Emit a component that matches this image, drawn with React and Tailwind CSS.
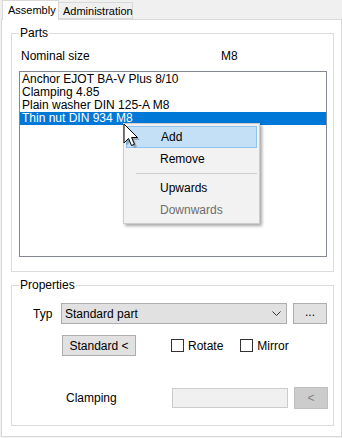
import React from 'react';

const font = { fontFamily: '"Liberation Sans", Arial, sans-serif' };

// Parts shown in the list box
const parts = [
    'Anchor EJOT BA-V Plus 8/10',
    'Clamping 4.85',
    'Plain washer DIN 125-A M8',
    'Thin nut DIN 934 M8',
];

const GroupBox = ({ title, className, children }) => (
    <div className={`relative border border-[#dcdcdc] ${className}`}>
        <span className="absolute -top-[8px] left-[7px] bg-white px-[1px] leading-[15px]">{title}</span>
        {children}
    </div>
);

const Checkbox = ({ label }) => (
    <label className="flex items-center gap-[4px]">
        <span className="w-[13px] h-[13px] border border-[#333] bg-white" />
        <span>{label}</span>
    </label>
);

const Cursor = () => (
    <svg className="absolute left-[123px] top-[123px]" width="20" height="26" viewBox="0 0 20 26">
        <path d="M2 2 L2 21 L6.5 16.5 L9.5 23.5 L12.5 22.3 L9.6 15.5 L15.5 15.5 Z" fill="rgba(0,0,0,0.25)" transform="translate(1.5,1.5)" />
        <path d="M1 1 L1 20 L5.5 15.5 L8.5 22.5 L11.5 21.3 L8.6 14.5 L14.5 14.5 Z" fill="#ffffff" stroke="#000" strokeWidth="1" strokeLinejoin="round" />
    </svg>
);

const ContextMenu = () => (
    <div className="absolute left-[123px] top-[123px] w-[137px] border border-[#cccccc] bg-[#f2f2f2] p-[2px] shadow-[2px_2px_3px_rgba(0,0,0,0.35)]">
        <div className="h-[22px] flex items-center pl-[34px] bg-[#c4e0f7] border border-[#8fc3ee]">Add</div>
        <div className="h-[22px] flex items-center pl-[34px]">Remove</div>
        <div className="h-[7px] flex items-center pl-[10px]"><div className="h-px w-full bg-[#cfcfcf]" /></div>
        <div className="h-[22px] flex items-center pl-[34px]">Upwards</div>
        <div className="h-[22px] flex items-center pl-[34px] text-[#6d6d6d]">Downwards</div>
    </div>
);

export default function App() {
    return (
        <div className="relative w-[342px] h-[438px] bg-[#f0f0f0] text-[12px] text-black overflow-hidden" style={font}>
            {/* Tabs */}
            <div className="flex items-end h-[19px] pl-[2px] text-[11px] whitespace-nowrap">
                <div className="relative z-10 w-[57px] h-[20px] -mb-[1px] bg-white border border-b-0 border-[#d9d9d9] pl-[5px] pt-[2px] leading-[15px]">Assembly</div>
                <div className="w-[74px] h-[17px] bg-[#f0f0f0] border border-l-0 border-[#d9d9d9] pl-[4px] pt-[1px] leading-[15px]">Administration</div>
            </div>

            {/* Tab page */}
            <div className="ml-[1px] w-[341px] h-[418px] bg-white border border-[#d9d9d9] pt-[13px] pl-[9px]">
                <GroupBox title="Parts" className="w-[323px] h-[239px]">
                    <div className="flex mt-[15px] ml-[9px] leading-[15px]">
                        <span className="w-[200px]">Nominal size</span>
                        <span>M8</span>
                    </div>
                    <div className="mt-[7px] ml-[7px] w-[308px] h-[186px] border border-[#828790] pt-[1px]">
                        {parts.map((p, i) => (
                            <div key={p} className={`h-[13px] leading-[13px] pl-[2px] ${i === 3 ? 'bg-[#0078d7] text-white' : ''}`}>{p}</div>
                        ))}
                    </div>
                </GroupBox>

                <GroupBox title="Properties" className="mt-[13px] w-[323px] h-[141px]">
                    <div className="flex items-center mt-[17px] ml-[21px]">
                        <span className="w-[28px]">Typ</span>
                        <div className="flex items-center justify-between w-[226px] h-[21px] bg-[#e1e1e1] border border-[#adadad] pl-[3px] pr-[5px]">
                            <span>Standard part</span>
                            <svg width="9" height="5" viewBox="0 0 9 5"><path d="M0.5 0.5 L4.5 4.5 L8.5 0.5" fill="none" stroke="#333" strokeWidth="1" /></svg>
                        </div>
                        <div className="ml-[6px] w-[34px] h-[21px] bg-[#e1e1e1] border border-[#adadad] flex items-center justify-center leading-none pb-[4px]">...</div>
                    </div>
                    <div className="flex items-center mt-[11px] ml-[50px]">
                        <div className="w-[74px] h-[21px] bg-[#e1e1e1] border border-[#adadad] flex items-center justify-center">Standard &lt;</div>
                        <div className="ml-[35px]"><Checkbox label="Rotate" /></div>
                        <div className="ml-[17px]"><Checkbox label="Mirror" /></div>
                    </div>
                    <div className="flex items-center mt-[31px] ml-[54px]">
                        <span className="w-[106px]">Clamping</span>
                        <div className="w-[116px] h-[20px] bg-[#f0f0f0] border border-[#cccccc]" />
                        <div className="ml-[6px] w-[34px] h-[22px] bg-[#cccccc] border border-[#bfbfbf] text-[#838383] flex items-center justify-center">&lt;</div>
                    </div>
                </GroupBox>
            </div>

            <ContextMenu />
            <Cursor />
        </div>
    );
}
